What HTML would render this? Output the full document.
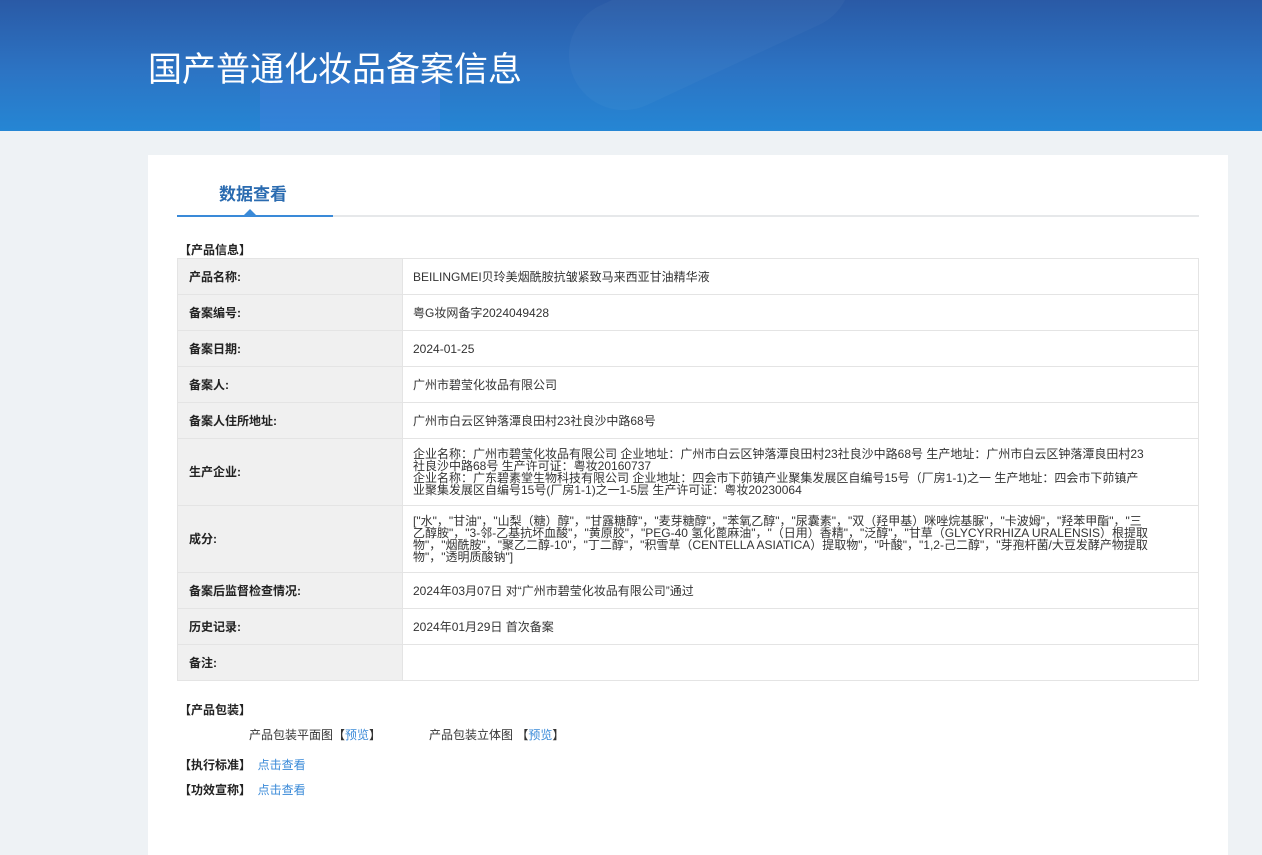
<!DOCTYPE html>
<html><head><meta charset="utf-8"><style>
*{margin:0;padding:0;box-sizing:border-box}
body{width:1262px;height:823px;overflow:hidden;background:#eef2f5;font-family:"Liberation Sans","Noto Sans CJK SC",sans-serif;font-size:12px;color:#333}
.hd{position:absolute;left:0;top:0;width:1262px;height:131px;background:linear-gradient(180deg,#2a5aa6 0%,#2c74c4 55%,#2586d4 100%);overflow:hidden}
.hd .s1{position:absolute;left:260px;top:80px;width:180px;height:60px;background:rgba(80,130,230,.3)}
.hd .s2{position:absolute;left:560px;top:-40px;width:300px;height:110px;border-radius:60px;background:rgba(255,255,255,.03);transform:rotate(-25deg)}
.hd h1{position:absolute;left:148px;top:42px;font-size:34px;font-weight:normal;color:#fff;letter-spacing:0px;font-family:"Liberation Sans","Noto Sans CJK SC",sans-serif}
.card{position:absolute;left:148px;top:155px;width:1080px;height:700px;background:#fff}
.tab{position:absolute;left:71px;top:25px;font-size:17px;font-weight:bold;color:#2a6bb0}
.line{position:absolute;left:29px;top:60px;width:1022px;height:2px;background:#e6e8ea}
.line2{position:absolute;left:29px;top:60px;width:156px;height:2px;background:#3a8ad8}
.tri{position:absolute;left:96px;top:54px;width:0;height:0;border-left:6px solid transparent;border-right:6px solid transparent;border-bottom:6px solid #3a8ad8}
.sec{position:absolute;font-weight:bold;color:#222;font-size:12px}
table{position:absolute;left:29px;top:103px;width:1022px;border-collapse:collapse;border:1px solid #a9c1e2}
td{border:1px solid #e4e4e4;padding:0 10px;vertical-align:middle;line-height:12px}
td.l{width:225px;background:#f0f0f0;font-weight:bold;color:#222;padding-left:11px}
a{color:#3a8ad8;text-decoration:none}
</style></head><body>
<div class="hd"><div class="s1"></div><div class="s2"></div><h1>国产普通化妆品备案信息</h1></div>
<div class="card">
<div class="tab">数据查看</div>
<div class="line"></div><div class="line2"></div><div class="tri"></div>
<div class="sec" style="left:31px;top:86px">【产品信息】</div>
<table>
<tr style="height:36px"><td class="l">产品名称:</td><td>BEILINGMEI贝玲美烟酰胺抗皱紧致马来西亚甘油精华液</td></tr>
<tr style="height:36px"><td class="l">备案编号:</td><td>粤G妆网备字2024049428</td></tr>
<tr style="height:36px"><td class="l">备案日期:</td><td>2024-01-25</td></tr>
<tr style="height:36px"><td class="l">备案人:</td><td>广州市碧莹化妆品有限公司</td></tr>
<tr style="height:36px"><td class="l">备案人住所地址:</td><td>广州市白云区钟落潭良田村23社良沙中路68号</td></tr>
<tr style="height:67px"><td class="l">生产企业:</td><td style="padding-right:50px">企业名称：广州市碧莹化妆品有限公司 企业地址：广州市白云区钟落潭良田村23社良沙中路68号 生产地址：广州市白云区钟落潭良田村23社良沙中路68号 生产许可证：粤妆20160737<br>企业名称：广东碧素堂生物科技有限公司 企业地址：四会市下茆镇产业聚集发展区自编号15号（厂房1-1)之一 生产地址：四会市下茆镇产业聚集发展区自编号15号(厂房1-1)之一1-5层 生产许可证：粤妆20230064</td></tr>
<tr style="height:67px"><td class="l">成分:</td><td style="padding-right:50px">["水"，"甘油"，"山梨（糖）醇"，"甘露糖醇"，"麦芽糖醇"，"苯氧乙醇"，"尿囊素"，"双（羟甲基）咪唑烷基脲"，"卡波姆"，"羟苯甲酯"，"三乙醇胺"，"3-邻-乙基抗坏血酸"，"黄原胶"，"PEG-40 氢化蓖麻油"，"（日用）香精"，"泛醇"，"甘草（GLYCYRRHIZA URALENSIS）根提取物"，"烟酰胺"，"聚乙二醇-10"，"丁二醇"，"积雪草（CENTELLA ASIATICA）提取物"，"叶酸"，"1,2-己二醇"，"芽孢杆菌/大豆发酵产物提取物"，"透明质酸钠"]</td></tr>
<tr style="height:36px"><td class="l">备案后监督检查情况:</td><td>2024年03月07日 对“广州市碧莹化妆品有限公司”通过</td></tr>
<tr style="height:36px"><td class="l">历史记录:</td><td>2024年01月29日 首次备案</td></tr>
<tr style="height:36px"><td class="l">备注:</td><td></td></tr>
</table>
<div class="sec" style="left:31px;top:546px">【产品包装】</div>
<div style="position:absolute;left:101px;top:571px">产品包装平面图【<a>预览</a>】</div>
<div style="position:absolute;left:281px;top:571px">产品包装立体图 【<a>预览</a>】</div>
<div class="sec" style="left:31px;top:601px">【执行标准】 &nbsp;<a style="font-weight:normal">点击查看</a></div>
<div class="sec" style="left:31px;top:626px">【功效宣称】 &nbsp;<a style="font-weight:normal">点击查看</a></div>
</div>
</body></html>
